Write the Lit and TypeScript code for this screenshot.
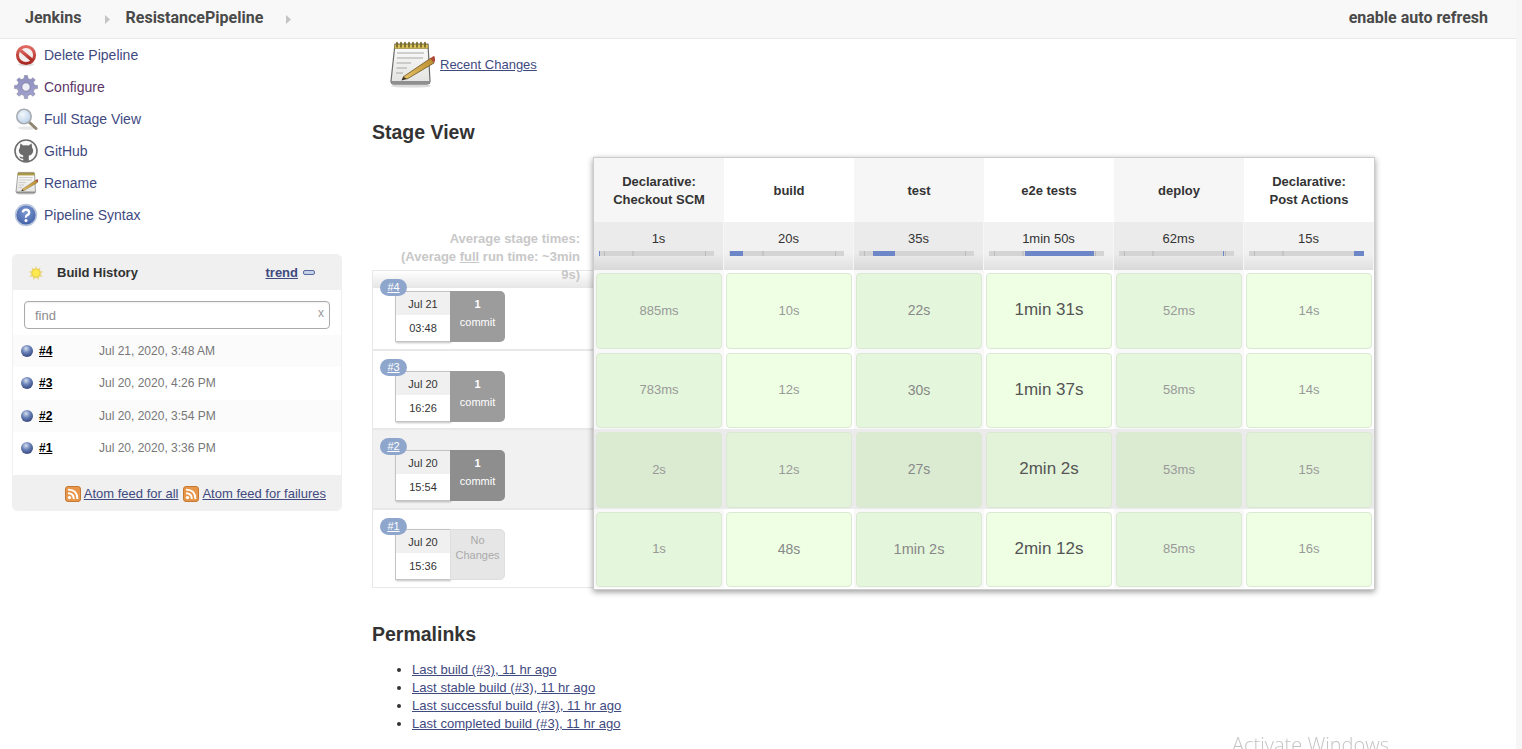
import {LitElement, html, css, svg} from 'lit';
import {customElement} from 'lit/decorators.js';

// stage columns: bar = [left %, width %] of the average time bar
const stages = [
  {name: ['Declarative:', 'Checkout SCM'], avg: '1s', bar: [0, 0.8]},
  {name: ['build'], avg: '20s', bar: [1, 11]},
  {name: ['test'], avg: '35s', bar: [12, 19]},
  {name: ['e2e tests'], avg: '1min 50s', bar: [31, 60]},
  {name: ['deploy'], avg: '62ms', bar: [90.5, 1]},
  {name: ['Declarative:', 'Post Actions'], avg: '15s', bar: [91.5, 8.5]},
];

// [text, font size]
const runs = [
  {
    id: '#4', date: 'Jul 21', time: '03:48', commits: 1,
    cells: [['885ms', 13], ['10s', 13], ['22s', 14], ['1min 31s', 17], ['52ms', 13], ['14s', 13]],
  },
  {
    id: '#3', date: 'Jul 20', time: '16:26', commits: 1,
    cells: [['783ms', 13], ['12s', 13], ['30s', 14], ['1min 37s', 17], ['58ms', 13], ['14s', 13]],
  },
  {
    id: '#2', date: 'Jul 20', time: '15:54', commits: 1, hover: true,
    cells: [['2s', 13], ['12s', 13], ['27s', 14], ['2min 2s', 17], ['53ms', 13], ['15s', 13]],
  },
  {
    id: '#1', date: 'Jul 20', time: '15:36', commits: 0,
    cells: [['1s', 13], ['48s', 14], ['1min 2s', 14.5], ['2min 12s', 17], ['85ms', 13], ['16s', 13]],
  },
];

const history = [
  ['#4', 'Jul 21, 2020, 3:48 AM'],
  ['#3', 'Jul 20, 2020, 4:26 PM'],
  ['#2', 'Jul 20, 2020, 3:54 PM'],
  ['#1', 'Jul 20, 2020, 3:36 PM'],
];

const permalinks = [
  'Last build (#3), 11 hr ago',
  'Last stable build (#3), 11 hr ago',
  'Last successful build (#3), 11 hr ago',
  'Last completed build (#3), 11 hr ago',
];

function gearPoints() {
  const pts: string[] = [];
  const teeth = 8;
  for (let i = 0; i < teeth; i++) {
    const a = (i / teeth) * Math.PI * 2;
    const step = (Math.PI * 2) / teeth;
    const ring: [number, number][] = [
      [8.6, a - step * 0.5],
      [8.8, a - step * 0.27],
      [11.6, a - step * 0.17],
      [11.6, a + step * 0.17],
      [8.8, a + step * 0.27],
    ];
    for (const [r, t] of ring) {
      pts.push(`${(12 + r * Math.cos(t)).toFixed(2)},${(12 + r * Math.sin(t)).toFixed(2)}`);
    }
  }
  return pts.join(' ');
}

const deleteIcon = html`<svg class="ico" viewBox="0 0 24 24">
  <defs><linearGradient id="red" x1="0" y1="0" x2="0" y2="1"><stop offset="0" stop-color="#e06a62"/><stop offset="1" stop-color="#a92a22"/></linearGradient></defs>
  <ellipse cx="12" cy="21.5" rx="8" ry="1.8" fill="#ccc" opacity=".6"/>
  <circle cx="12" cy="12" r="8.6" fill="#f4eeee" stroke="url(#red)" stroke-width="3"/>
  <path d="M5.8 6.8L18.2 17.2" stroke="url(#red)" stroke-width="3.4"/>
</svg>`;

const gearIcon = html`<svg class="ico" viewBox="0 0 24 24">
  <defs><linearGradient id="gear" x1="0" y1="0" x2="0" y2="1"><stop offset="0" stop-color="#8d8dc0"/><stop offset="1" stop-color="#a3a3cf"/></linearGradient></defs>
  <polygon points=${gearPoints()} fill="url(#gear)" stroke="#8a8a9e" stroke-width=".6"/>
  <circle cx="12" cy="12" r="4.2" fill="#eeeef6" stroke="#77779a" stroke-width=".8"/>
</svg>`;

const searchIcon = html`<svg class="ico" viewBox="0 0 24 24">
  <defs><radialGradient id="lens" cx=".4" cy=".35" r=".7"><stop offset="0" stop-color="#f2f7fc"/><stop offset="1" stop-color="#b9d0e8"/></radialGradient></defs>
  <ellipse cx="13" cy="21" rx="9" ry="1.8" fill="#ddd" opacity=".7"/>
  <path d="M15 15L22 21.5" stroke="#8f8672" stroke-width="3" stroke-linecap="round"/>
  <circle cx="10" cy="9.5" r="7.2" fill="url(#lens)" stroke="#a9adb3" stroke-width="1.6"/>
</svg>`;

const githubIcon = html`<svg class="ico" viewBox="0 0 24 24">
  <circle cx="12" cy="12" r="11" fill="#fbfbfb" stroke="#6e6e6e" stroke-width="1.6"/>
  <path d="M6.4 4.6L9.4 6.6Q12 6 14.6 6.6L17.6 4.6L18.1 8.6Q19.6 10.6 18.9 13.2Q18 16.2 14.8 16.4V22.2H9.2V19.6Q6.4 20 5.2 17.4L7 17.8Q8.2 18.6 9.2 18V16.4Q6 16 5.1 13.2Q4.4 10.6 5.9 8.6Z" fill="#6b6b6b"/>
</svg>`;

// same notepad for the 24px task and the big Recent Changes picture
const notepad = (cls: string) => html`<svg class=${cls} viewBox="0 0 48 48">
  <defs>
    <linearGradient id="paper" x1="0" y1="0" x2="0" y2="1"><stop offset="0" stop-color="#fcfcfc"/><stop offset="1" stop-color="#e2e2e0"/></linearGradient>
    <linearGradient id="pencil" x1="0" y1="1" x2="1" y2="0"><stop offset="0" stop-color="#e8c468"/><stop offset="1" stop-color="#b88a2c"/></linearGradient>
  </defs>
  <ellipse cx="24" cy="46" rx="20" ry="1.6" fill="#ccc" opacity=".7"/>
  <path d="M8 4H41L43 41Q43 44 40 44H7Q4 44 4 41Z" fill="url(#paper)" stroke="#6a6a6a" stroke-width="1.2"/>
  <path d="M4.2 41H43V42Q43 44.4 40 44.4H7Q4.2 44.4 4.2 42Z" fill="#8f8f8f"/>
  <path d="M7.8 4.5H41V8.5H7.4Z" fill="#d9c15c" stroke="#8a7a30" stroke-width=".6"/>
  <path d="M10 2.5V7M14 2.5V7M18 2.5V7M22 2.5V7M26 2.5V7M30 2.5V7M34 2.5V7M38 2.5V7" stroke="#6f5f20" stroke-width="1.6" stroke-linecap="round"/>
  <path d="M10 13H37M10 18H36M9.5 23H24M9.5 28H20M9 33H16" stroke="#a8a8a8" stroke-width="1"/>
  <path d="M16 37L44 18L47 23L20 39Z" fill="url(#pencil)" stroke="#6b5420" stroke-width=".8"/>
  <path d="M43 18.5L47 15.8Q49 19 47.4 22.6Z" fill="#b2483c"/>
  <path d="M16 37L14.5 40.5L20 39Z" fill="#3a3020"/>
</svg>`;

const helpIcon = html`<svg class="ico" viewBox="0 0 24 24">
  <defs><radialGradient id="help" cx=".5" cy=".35" r=".7"><stop offset="0" stop-color="#7e9bd6"/><stop offset="1" stop-color="#3d5aa0"/></radialGradient></defs>
  <circle cx="12" cy="12" r="10.4" fill="url(#help)" stroke="#b9c6dc" stroke-width="1.6"/>
  <path d="M8.8 9.4Q9 6.6 12 6.6T15.2 9.4Q15.2 11 13.4 12T12 14.6" fill="none" stroke="#fff" stroke-width="2.3"/>
  <circle cx="12" cy="17.4" r="1.5" fill="#fff"/>
</svg>`;

const sunIcon = html`<svg class="sun" viewBox="0 0 24 24">
  <polygon points="12,1 14,6 18.5,3.5 18,8.5 23,10 19,13 22,17.5 17,17.5 16,22.5 12,19 8,22.5 7,17.5 2,17.5 5,13 1,10 6,8.5 5.5,3.5 10,6" fill="#ead98c"/>
  <circle cx="12" cy="12" r="6" fill="#fbe94e" stroke="#e7c93e"/>
</svg>`;

const ball = html`<svg class="ball" viewBox="0 0 12 12">
  <defs><radialGradient id="ball" cx=".42" cy=".3" r=".75"><stop offset="0" stop-color="#d5deee"/><stop offset=".45" stop-color="#6c84ba"/><stop offset="1" stop-color="#2e3f78"/></radialGradient></defs>
  <circle cx="6" cy="6" r="6" fill="url(#ball)"/>
</svg>`;

const rss = html`<svg class="rss" viewBox="0 0 16 16">
  <rect x=".5" y=".5" width="15" height="15" rx="2.5" fill="#e8964a" stroke="#c57a34"/>
  <circle cx="4.4" cy="11.6" r="1.7" fill="#fff"/>
  <path d="M3 7.2Q8.8 7.2 8.8 13M3 3.6Q12.4 3.6 12.4 13" fill="none" stroke="#fff" stroke-width="1.9"/>
</svg>`;

const arrow = svg`<path d="M0 0L5 4.5L0 9Z" fill="#c4c4c4"/>`;

@customElement('app-root')
export class AppRoot extends LitElement {
  static override styles = css`
    :host {
      display: flex;
      height: 100vh;
      overflow: hidden;
      background: #fff;
      color: #333;
      font-family: 'Liberation Sans', Arial, sans-serif;
      font-size: 13px;
    }

    a {
      color: #3f4a7f;
    }

    .page {
      flex: 1;
      min-width: 0;
    }

    .scrollbar {
      width: 6px;
      background: #f6f6f6;
    }

    header {
      height: 38px;
      box-sizing: content-box;
      border-bottom: 1px solid #e8e8e8;
      background: #f8f8f8;
      display: flex;
      align-items: center;
      padding: 0 28px 0 25px;
      font-family: Roboto, sans-serif;
      font-size: 16px;
      line-height: 36px;
      font-weight: 700;
      color: #4a4a4a;
    }

    header span {
      margin-bottom: 2px;
    }

    .crumb-arrow {
      width: 5px;
      height: 9px;
      margin: 0 16px 0 23px;
    }

    .refresh {
      margin-left: auto;
    }

    .body {
      display: grid;
      grid-template-columns: 372px 1fr;
    }

    .tasks {
      font-size: 14px;
    }

    .task {
      height: 32px;
      display: flex;
      align-items: center;
      gap: 6px;
      padding-left: 14px;
    }

    .task a {
      text-decoration: none;
    }

    .task a.visited {
      color: #5c3566;
    }

    .ico {
      width: 24px;
      height: 24px;
      flex: none;
    }

    .history {
      width: 330px;
      margin: 23px 0 0 12px;
      box-sizing: border-box;
      border: 1px solid #f0f0f0;
      border-radius: 5px;
      overflow: hidden;
    }

    .history-head {
      height: 35px;
      background: #f0f0f0;
      display: flex;
      align-items: center;
      padding: 0 26px 0 15px;
      font-weight: 700;
    }

    .sun {
      width: 16px;
      height: 16px;
      margin-right: 13px;
    }

    .trend {
      margin-left: auto;
      font-weight: 700;
    }

    .collapse {
      width: 10px;
      height: 3px;
      margin-left: 5px;
      border: 1px solid #5a6a9e;
      border-radius: 2px;
      background: #c4d2e8;
    }

    .search {
      position: relative;
      margin: 11px 11px 6px;
    }

    .search input {
      display: block;
      width: 100%;
      height: 28px;
      box-sizing: border-box;
      border: 1px solid #aaa;
      border-radius: 4px;
      padding: 0 10px;
      font: 13px 'Liberation Sans', Arial, sans-serif;
      box-shadow: inset 0 1px 2px rgba(0, 0, 0, 0.06);
    }

    .search input::placeholder {
      color: #8c8c8c;
    }

    .search span {
      position: absolute;
      right: 6px;
      top: 5px;
      font-size: 12px;
      color: #999;
    }

    .build {
      height: 32.33px;
      display: flex;
      align-items: center;
      padding-left: 8px;
    }

    .build:nth-child(odd) {
      background: #fbfbfb;
    }

    .ball {
      width: 12px;
      height: 12px;
      margin-right: 6px;
    }

    .build a {
      width: 60px;
      font-size: 12px;
      font-weight: 700;
      color: #000;
    }

    .build span {
      font-size: 12px;
      color: #777;
    }

    .history-foot {
      height: 35px;
      box-sizing: border-box;
      padding: 2px 15px 0 0;
      margin-top: 11px;
      background: #f0f0f0;
      display: flex;
      align-items: center;
      justify-content: flex-end;
      gap: 3px;
    }

    .rss {
      width: 16px;
      height: 16px;
    }

    .rss + a + .rss {
      margin-left: 2px;
    }

    .recent {
      display: flex;
      align-items: center;
      gap: 5px;
      height: 50px;
      padding-left: 15px;
    }

    .recent-ico {
      width: 48px;
      height: 48px;
    }

    h2 {
      margin: 0;
      font-size: 19.5px;
      line-height: 24px;
      font-weight: 700;
      color: #333;
    }

    .stage-title {
      margin-top: 31px;
    }

    .stage {
      display: flex;
      margin-top: 13px;
    }

    .labels {
      width: 221px;
    }

    .avg-label {
      height: 113px;
      box-sizing: border-box;
      padding: 73px 13px 0 20px;
      text-align: right;
      font-weight: 700;
      line-height: 18px;
      color: #c8c8c8;
      position: relative;
      z-index: 1;
    }

    .run {
      height: 79px;
      box-sizing: border-box;
      position: relative;
      padding: 20px 0 0 22px;
      border: 1px solid #e8e8e8;
      border-right: 0;
    }

    .run.tall {
      height: 80px;
    }

    .run:last-child {
      padding-top: 19px;
    }

    .run.hover {
      background: #f1f1f1;
    }

    .run.first::before {
      content: '';
      position: absolute;
      left: 0;
      right: 0;
      top: 0;
      height: 17px;
      background: linear-gradient(#fff, #e6e6e6);
    }

    .badge {
      position: absolute;
      left: 7px;
      top: 8px;
      z-index: 1;
      width: 27px;
      height: 17px;
      border-radius: 9px;
      background: #8ea6cc;
      color: #fff;
      font-size: 11px;
      line-height: 17px;
      text-align: center;
      text-decoration: underline;
    }

    .chip {
      position: relative;
      display: flex;
      width: 110px;
      height: 51px;
      font-size: 11px;
      text-align: center;
    }

    .when {
      width: 55px;
      box-sizing: border-box;
      border: 1px solid #c4c4c4;
      border-right: 0;
      box-shadow: 1px 1px 2px rgba(0, 0, 0, 0.25);
      background: #fff;
      color: #333;
    }

    .when div {
      height: 23px;
      line-height: 24px;
      background: #f0f0f0;
    }

    .when p {
      margin: 0;
      line-height: 26px;
    }

    .changes {
      width: 55px;
      border-radius: 0 5px 5px 0;
      background: #9c9c9c;
      color: #fff;
      padding-top: 5px;
      box-sizing: border-box;
    }

    .run.hover .changes {
      background: #8e8e8e;
    }

    .changes b {
      display: block;
      line-height: 17px;
    }

    .changes span {
      line-height: 19px;
    }

    .changes.none {
      background: #e6e6e6;
      border: 1px solid #dedede;
      color: #aaa;
      padding-top: 3px;
      line-height: 15px;
    }

    .grid {
      display: grid;
      grid-template-columns: repeat(6, 130px);
      grid-template-rows: 64px 48px 80px 79px 80px 79px;
      border: 1px solid #ccc;
      padding-bottom: 1px;
      background: #fff;
      box-shadow: 0 2px 6px rgba(0, 0, 0, 0.4);
      position: relative;
    }

    .th {
      display: flex;
      align-items: center;
      justify-content: center;
      box-sizing: border-box;
      padding-top: 2px;
      text-align: center;
      font-weight: 700;
      line-height: 18px;
    }

    .th.odd {
      background: #f6f6f6;
    }

    .avg {
      text-align: center;
      padding-top: 9px;
      box-sizing: border-box;
      background: linear-gradient(#f1f1f1 65%, #e0e0e0);
      border-right: 1px solid #f6f6f6;
    }

    .avg.odd {
      background: linear-gradient(#ebebeb 65%, #d8d8d8);
    }

    .bar {
      position: relative;
      height: 5px;
      margin: 5px 9px 0 5px;
      background:
        linear-gradient(90deg, transparent 4%, #bbb 4%, #bbb 5%, transparent 5%, transparent 29%, #c4c4c4 29%, #c4c4c4 30%, transparent 30%, transparent 92%, #bbb 92%, #bbb 93%, transparent 93%),
        #d4d4d4;
    }

    .bar i {
      position: absolute;
      top: 0;
      bottom: 0;
      background: #6d86c8;
    }

    .slot {
      display: flex;
      padding: 3px 2px 1px;
      box-sizing: border-box;
    }

    .slot.odd {
      background: #f8f8f8;
    }

    .slot.hover {
      background: #ebebeb;
    }

    .cell {
      flex: 1;
      display: flex;
      align-items: center;
      justify-content: center;
      box-sizing: border-box;
      padding-bottom: 2px;
      border: 1px solid #dbe8d3;
      border-radius: 4px;
      background: #eeffe4;
      color: #999;
    }

    .slot.odd .cell {
      background: #e4f6db;
    }

    .slot.hover .cell {
      background: #e3f3d9;
    }

    .slot.hover.odd .cell {
      background: #dbebd2;
    }

    .cell.mid {
      color: #888;
    }

    .cell.big {
      color: #555;
    }

    .perma-title {
      margin-top: 32px;
    }

    ul {
      margin: 15px 0 0;
      padding-left: 40px;
      font-size: 13.1px;
      line-height: 18px;
    }

    .watermark {
      position: fixed;
      left: 1232px;
      top: 731px;
      font-family: 'Open Sans', sans-serif;
      font-size: 20px;
      font-weight: 300;
      white-space: nowrap;
      color: #c4c4c4;
    }
  `;

  private renderRun(run: (typeof runs)[number], i: number) {
    return html`<div class="run ${i === 0 ? 'first' : ''} ${i % 2 ? '' : 'tall'} ${run.hover ? 'hover' : ''}">
      <div class="badge">${run.id}</div>
      <div class="chip">
        <div class="when">
          <div>${run.date}</div>
          <p>${run.time}</p>
        </div>
        ${run.commits
          ? html`<div class="changes"><b>${run.commits}</b><span>commit</span></div>`
          : html`<div class="changes none">No<br />Changes</div>`}
      </div>
    </div>`;
  }

  override render() {
    return html`
      <div class="page">
        <header>
          <span>Jenkins</span>
          <svg class="crumb-arrow" viewBox="0 0 5 9">${arrow}</svg>
          <span>ResistancePipeline</span>
          <svg class="crumb-arrow" viewBox="0 0 5 9">${arrow}</svg>
          <span class="refresh">enable auto refresh</span>
        </header>
        <div class="body">
          <aside>
            <div class="tasks">
              <div class="task">${deleteIcon}<a href="#">Delete Pipeline</a></div>
              <div class="task">${gearIcon}<a href="#" class="visited">Configure</a></div>
              <div class="task">${searchIcon}<a href="#">Full Stage View</a></div>
              <div class="task">${githubIcon}<a href="#">GitHub</a></div>
              <div class="task">${notepad('ico')}<a href="#">Rename</a></div>
              <div class="task">${helpIcon}<a href="#">Pipeline Syntax</a></div>
            </div>
            <section class="history">
              <div class="history-head">
                ${sunIcon}
                <span>Build History</span>
                <a class="trend" href="#">trend</a>
                <div class="collapse"></div>
              </div>
              <div class="search">
                <input placeholder="find" />
                <span>x</span>
              </div>
              <div>
                ${history.map(
                  ([id, date]) => html`<div class="build">
                    ${ball}<a href="#">${id}</a><span>${date}</span>
                  </div>`
                )}
              </div>
              <div class="history-foot">
                ${rss}<a href="#">Atom feed for all</a>
                ${rss}<a href="#">Atom feed for failures</a>
              </div>
            </section>
          </aside>
          <main>
            <div class="recent">
              ${notepad('recent-ico')}
              <a href="#">Recent Changes</a>
            </div>
            <h2 class="stage-title">Stage View</h2>
            <div class="stage">
              <div class="labels">
                <div class="avg-label">
                  Average stage times:<br />
                  (Average <u>full</u> run time: ~3min 9s)
                </div>
                ${runs.map((run, i) => this.renderRun(run, i))}
              </div>
              <div class="grid">
                ${stages.map(
                  (s, i) => html`<div class="th ${i % 2 ? '' : 'odd'}">
                    <div>${s.name.map((line) => html`${line}<br />`)}</div>
                  </div>`
                )}
                ${stages.map(
                  (s, i) => html`<div class="avg ${i % 2 ? '' : 'odd'}">
                    ${s.avg}
                    <div class="bar">
                      <i style="left:${s.bar[0]}%;width:${s.bar[1]}%"></i>
                    </div>
                  </div>`
                )}
                ${runs.map((run) =>
                  run.cells.map(([text, size], i) => {
                    const tone = size === 17 ? 'big' : size === 13 ? '' : 'mid';
                    return html`<div class="slot ${i % 2 ? '' : 'odd'} ${run.hover ? 'hover' : ''}">
                      <div class="cell ${tone}" style="font-size:${size}px">${text}</div>
                    </div>`;
                  })
                )}
              </div>
            </div>
            <h2 class="perma-title">Permalinks</h2>
            <ul>
              ${permalinks.map((p) => html`<li><a href="#">${p}</a></li>`)}
            </ul>
          </main>
        </div>
      </div>
      <div class="scrollbar"></div>
      <div class="watermark">Activate Windows</div>
    `;
  }
}
